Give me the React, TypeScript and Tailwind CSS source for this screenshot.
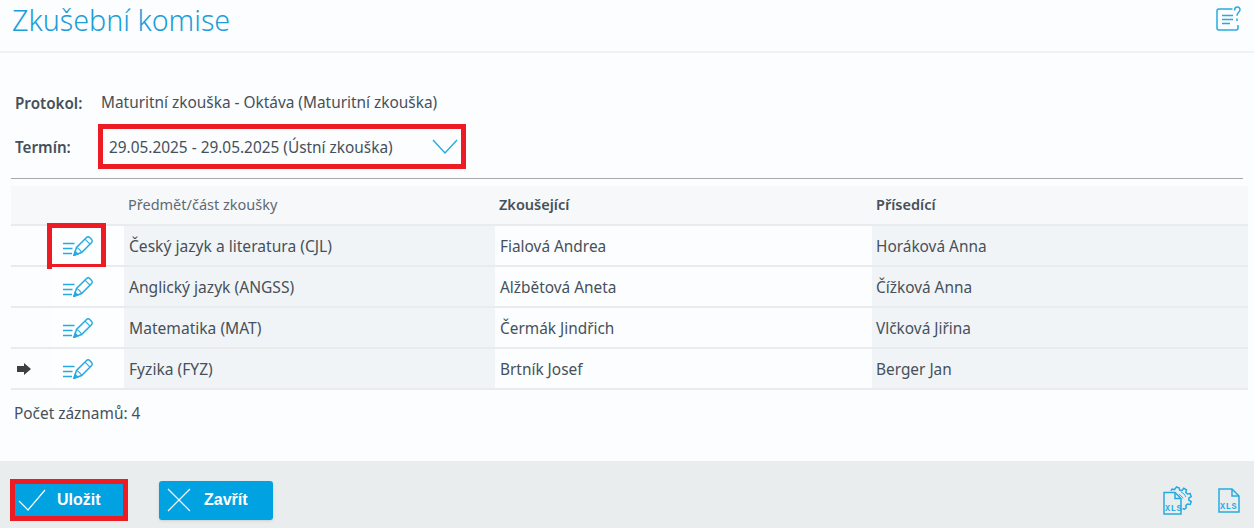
import React from 'react';

const font = "font-['Noto_Sans','Open_Sans',sans-serif]";

function EditIcon() {
  return (
    <svg width="30" height="20" viewBox="0 0 30 20" fill="none" stroke="#27aae1" strokeWidth="1.5">
      <path d="M0 7.500h11.500M0 12.500h9.500M0 17.500h9" />
      <path d="M11 19.200l2.500-7.700L23.300 1.700c1-1 2.600-1 3.700.1l1.400 1.400c1 1 1 2.500 0 3.500L18.600 16.500z" />
      <path d="M13.500 11.500c1.500.4 4.300 3 5.100 5M22 3.200l5 5" strokeWidth="1.200" />
      <path d="M11 19.200l3.600-1.200-2.400-2.400z" fill="#27aae1" />
    </svg>
  );
}

function ArrowIcon() {
  return (
    <svg width="14" height="12" viewBox="0 0 14 12">
      <path d="M0 3h7V0l7 6-7 6V9H0z" fill="#3f3f3f" />
    </svg>
  );
}

function HelpIcon() {
  return (
    <svg width="25" height="25" viewBox="0 0 25 25" fill="none" stroke="#27aae1" strokeWidth="1.5">
      <path d="M16.500 3H3a2 2 0 0 0-2 2v17a2 2 0 0 0 2 2h17a2 2 0 0 0 2-2v-3" />
      <path d="M6 9.500h11M6 13.500h11M6 17.500h8" strokeWidth="1.700" />
      <path d="M18.500 4.500c0-4.500 5.500-4.500 5.500-.8 0 2.600-3 2.700-3 6" />
      <path d="M21 12.500v2.500" />
    </svg>
  );
}

function XlsLabel({ x, y }: { x: number; y: number }) {
  return (
    <text x={x} y={y} fontSize="8.500" fontWeight="700" fontFamily="'Liberation Mono', monospace" fill="#27aae1" stroke="none" letterSpacing="0.6">
      XLS
    </text>
  );
}

function XlsGearIcon() {
  return (
    <svg width="32" height="29" viewBox="0 0 32 29" fill="none" stroke="#27aae1" strokeWidth="1.5">
      <path d="M1 6.500h11l6 6v15.500H1z" />
      <path d="M12 6.500v6h6" />
      <path d="M8 5l1-2 2.500.6L13.500 1l2.800 1 .4 2.300 2.300.2 1.700-2.200 2.800 1.500-.7 2.700 1.700 1.500 2.700-.4 1 3-2.300 1.300v2.300l2.300 1.300-1 3-2.700-.5-1.700 1.500.5 2.300-2 1.500-1.800-1" />
      <path d="M16 8.500c1.800.8 3.300 2.300 4 4M18 6c2.300.8 4 2.700 4.800 5" strokeWidth="1" />
      <XlsLabel x={2} y={25} />
    </svg>
  );
}

function XlsIcon() {
  return (
    <svg width="22" height="25" viewBox="0 0 22 25" fill="none" stroke="#27aae1" strokeWidth="1.5">
      <path d="M1 1h13l7 7v16H1z" />
      <path d="M14 1v7h7" />
      <XlsLabel x={2} y={21} />
    </svg>
  );
}

const rows = [
  { subject: 'Český jazyk a literatura (CJL)', examiner: 'Fialová Andrea', assessor: 'Horáková Anna', marked: true },
  { subject: 'Anglický jazyk (ANGSS)', examiner: 'Alžbětová Aneta', assessor: 'Čížková Anna' },
  { subject: 'Matematika (MAT)', examiner: 'Čermák Jindřich', assessor: 'Vlčková Jiřina' },
  { subject: 'Fyzika (FYZ)', examiner: 'Brtník Josef', assessor: 'Berger Jan', current: true },
];

export default function App() {
  return (
    <div className={`${font} flex h-[528px] w-[1254px] flex-col overflow-hidden bg-[#fbfdfe] text-[15.4px] text-[#46505a]`}>
      {/* Header */}
      <header className="flex h-[53px] shrink-0 items-start justify-between border-b-2 border-[#f0f2f4] pl-3 pr-[13px]">
        <h1 className="text-[28.7px] font-light leading-[40px] text-[#1b9ed9]">Zkušební komise</h1>
        <div className="pt-[6px]">
          <HelpIcon />
        </div>
      </header>

      {/* Form */}
      <div className="flex flex-1 flex-col px-[11px]">
        <div className="mt-[38px] flex h-6 items-center px-1">
          <span className="w-[86px] text-[15.2px] font-semibold">Protokol:</span>
          <span>Maturitní zkouška - Oktáva (Maturitní zkouška)</span>
        </div>

        <div className="mt-[9px] flex items-center px-1">
          <span className="w-[83px] pt-[2px] text-[15.2px] font-semibold">Termín:</span>
          <div className="flex h-[45px] w-[368px] items-center justify-between border-[5px] border-[#ed1c24] pl-[6px] pr-[3px]">
            <span className="pt-[2px]">29.05.2025 - 29.05.2025 (Ústní zkouška)</span>
            <svg width="26" height="16" viewBox="0 0 26 16" fill="none" stroke="#27aae1" strokeWidth="1.4">
              <path d="M1 1l12 13L25 1" />
            </svg>
          </div>
        </div>

        <div className="mt-[9px] h-px bg-[#a9a9a9]" />

        {/* Table */}
        <div className="mt-[7px] w-[1237px]">
          <div className="flex h-10 items-center border-b-2 border-[#e9ebed] bg-[#f6f8f9]">
            <div className="w-[117px]" />
            <div className="w-[371px] text-[14.5px] text-[#5f6973]">Předmět/část zkoušky</div>
            <div className="w-[377px] text-[14.5px] font-semibold">Zkoušející</div>
            <div className="text-[14.5px] font-semibold">Přísedící</div>
          </div>
          {rows.map((row) => (
            <div key={row.subject} className="relative flex h-[41px] items-stretch border-b-2 border-[#e9ebed]">
              <div className="flex w-[41px] items-center pl-[6px]">{row.current && <ArrowIcon />}</div>
              <div className="flex w-[72px] items-center bg-[#fdfeff] pl-[11px]">
                <EditIcon />
              </div>
              <div className="flex w-[371px] items-center bg-[#f1f4f6] pl-[5px] pt-[2px] text-[15.6px]">{row.subject}</div>
              <div className="flex w-[377px] items-center pl-[5px] pt-[2px]">{row.examiner}</div>
              <div className="flex flex-1 items-center bg-[#f1f4f6] pl-[4px] pt-[2px]">{row.assessor}</div>
              {row.marked && (
                <div className="absolute left-[36px] top-[-3px] h-[46px] w-[59px] border-[5px] border-[#ed1c24]" />
              )}
            </div>
          ))}
        </div>

        <div className="mt-[12px] px-[3px]">Počet záznamů: 4</div>
      </div>

      {/* Footer */}
      <footer className="flex h-[67px] shrink-0 items-center justify-between bg-[#e9edee] pl-[10px] pr-[14px] pt-[11px] font-['Liberation_Sans',sans-serif]">
        <div className="flex items-center gap-[31px]">
          <button className="flex h-[42px] w-[118px] items-center border-[5px] border-[#ed1c24] bg-[#00a2e2] text-[16px] font-bold text-white">
            <svg width="30" height="24" viewBox="0 0 30 24" fill="none" stroke="white" strokeWidth="1.2" className="ml-[3px]">
              <path d="M1 13l9 9L27 2" />
            </svg>
            <span className="ml-[9px]">Uložit</span>
          </button>
          <button className="flex h-[39px] w-[114px] items-center rounded-[3px] bg-[#00a2e2] text-[16px] font-bold text-white shadow-sm">
            <svg width="24" height="24" viewBox="0 0 24 24" fill="none" stroke="white" strokeWidth="1.2" className="ml-[8px]">
              <path d="M1 1l22 22M23 1L1 23" />
            </svg>
            <span className="ml-[13px]">Zavřít</span>
          </button>
        </div>
        <div className="flex items-center gap-[23px]">
          <XlsGearIcon />
          <XlsIcon />
        </div>
      </footer>
    </div>
  );
}
